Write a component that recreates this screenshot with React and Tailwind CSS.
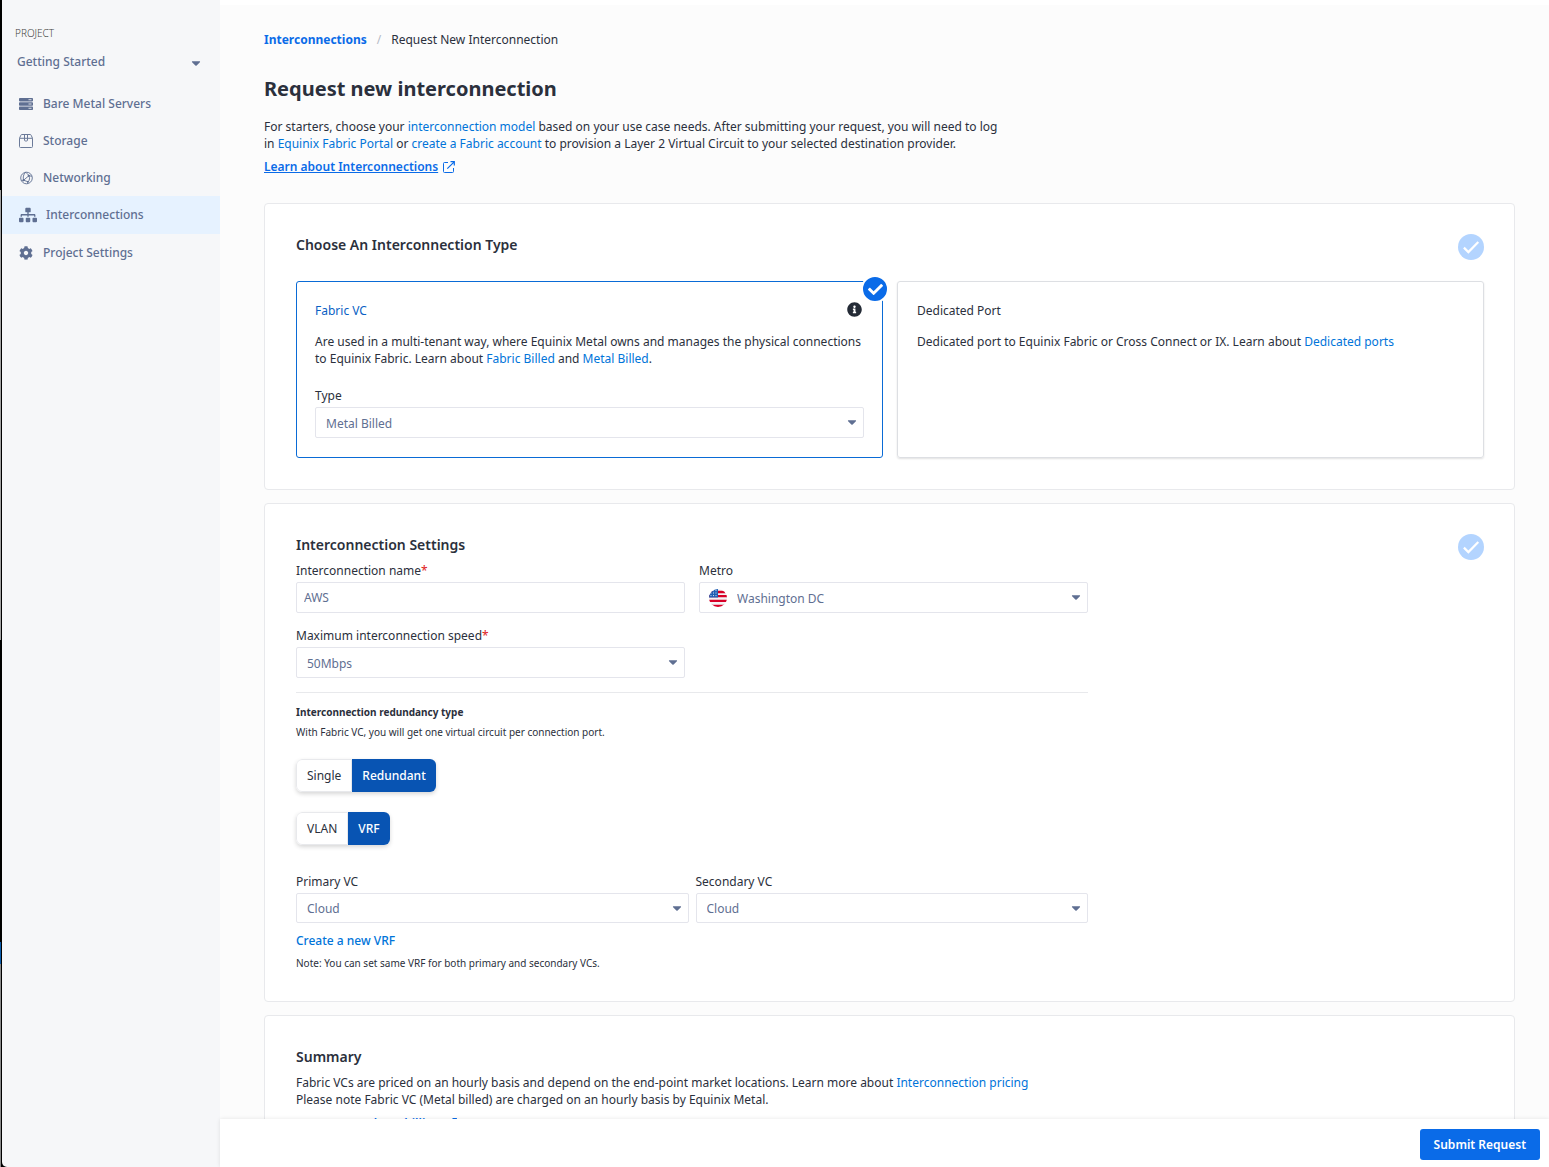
import { useState } from "react";
import { FaCaretDown, FaCheck, FaInfoCircle, FaSitemap, FaCog } from "react-icons/fa";

function ServersIcon() {
  return (
    <svg width="14" height="12" viewBox="0 0 14 12" aria-hidden="true">
      <rect x="0" y="0" width="14" height="3.4" rx="0.8" fill="#5f6f92" />
      <rect x="0" y="4.3" width="14" height="3.4" rx="0.8" fill="#5f6f92" />
      <rect x="0" y="8.6" width="14" height="3.4" rx="0.8" fill="#5f6f92" />
      <path d="M9.5 1.7h3M9.5 6h3M9.5 10.3h3" stroke="#f6f7f9" strokeWidth="0.8" />
    </svg>
  );
}

function StorageIcon() {
  return (
    <svg width="14" height="14" viewBox="0 0 14 14" fill="none" stroke="#6b7a99" strokeWidth="1" aria-hidden="true">
      <path d="M.5 4.3v8.2a1 1 0 0 0 1 1h11a1 1 0 0 0 1-1V4.3zL1.8 1.3a1.2 1.2 0 0 1 1.1-.8h8.2a1.2 1.2 0 0 1 1.1.8l1.3 3" />
      <path d="M5.5.5V6a1 1 0 0 0 1 1h1a1 1 0 0 0 1-1V.5" />
    </svg>
  );
}

function NetworkIcon() {
  return (
    <svg width="14" height="14" viewBox="0 0 14 14" fill="none" stroke="#5f6f92" strokeWidth="0.9" aria-hidden="true">
      <circle cx="7.5" cy="7" r="5.8" />
      <path d="M6.5 1.3C4.3 3.6 3.8 6.4 4.6 9.2L9.8 4.8C11 6.8 10.8 9 9 10.8L4.6 9.2M6.5 1.3C8 2.2 9.2 3.3 9.8 4.8L12.9 5.2M4.6 9.2 2.3 9.4M9 10.8 8.3 12.7" />
      <circle cx="4.6" cy="9.2" r=".7" fill="#5f6f92" />
      <circle cx="9.8" cy="4.8" r=".7" fill="#5f6f92" />
      <circle cx="9" cy="10.8" r=".5" fill="#5f6f92" />
    </svg>
  );
}

function ExternalIcon() {
  return (
    <svg width="12" height="12" viewBox="0 0 12 12" fill="none" stroke="#0a6be8" strokeWidth="1" aria-hidden="true">
      <path d="M5 1.5H1.5a1 1 0 0 0-1 1v8a1 1 0 0 0 1 1h8a1 1 0 0 0 1-1V7" />
      <path d="M7.5.7h3.8v3.8M11.2.8 4.3 7.7" strokeWidth="1.2" />
    </svg>
  );
}

function DoneIcon() {
  return (
    <svg width="26" height="26" viewBox="0 0 26 26" fill="none" className="shrink-0" aria-hidden="true">
      <circle cx="13" cy="13" r="13" fill="#b3d4ff" />
      <path d="M5.9 13.6l4.5 4.5L20.3 8" stroke="#fff" strokeWidth="2.2" />
    </svg>
  );
}

function FlagIcon() {
  return (
    <svg width="18" height="18" viewBox="0 0 18 18" aria-hidden="true">
      <clipPath id="flag-round">
        <circle cx="9" cy="9" r="9" />
      </clipPath>
      <g clipPath="url(#flag-round)">
        <rect width="18" height="18" fill="#f3f3f5" />
        <path d="M0 3h18M0 7.200h18M0 11.800h18M0 16.800h18" stroke="#d80027" strokeWidth="2.300" />
        <rect width="9" height="8.500" fill="#1f5fb5" />
        <path d="M1.500 4h7M1.500 6.600h7M4 1.600h4.500" stroke="#f3f3f5" strokeWidth="0.900" strokeDasharray="1 1.500" />
      </g>
    </svg>
  );
}

const NAV = [
  { label: "Bare Metal Servers", icon: <ServersIcon /> },
  { label: "Storage", icon: <StorageIcon /> },
  { label: "Networking", icon: <NetworkIcon /> },
  { label: "Interconnections", icon: <FaSitemap size={18} />, active: true },
  { label: "Project Settings", icon: <FaCog size={14} /> },
];

function Sidebar() {
  return (
    <aside className="flex w-[218px] shrink-0 flex-col rounded-bl-[5px] bg-[#f6f7f9] pt-[26px] text-[#5f6f92]">
      <label htmlFor="project" className="pl-[13px] text-[10px] leading-[14px] font-light text-[#444]">
        PROJECT
      </label>
      <div className="relative mt-[12px] mb-[14px]">
        <select id="project" className="h-[19px] w-full appearance-none bg-transparent pl-[15px] text-[12px] leading-[18px] font-medium outline-none">
          <option>Getting Started</option>
        </select>
        <FaCaretDown size={14} className="pointer-events-none absolute top-[4px] right-[17px]" />
      </div>
      <nav>
        {NAV.map((item) => (
          <a
            key={item.label}
            href="#"
            className={
              item.active
                ? "flex h-[38px] items-center gap-[9px] bg-[#e6f2ff] pl-[17px] text-[12px] font-medium"
                : "flex h-[37px] items-center gap-[10px] pl-[17px] text-[12px] font-medium"
            }
          >
            {item.icon}
            {item.label}
          </a>
        ))}
      </nav>
    </aside>
  );
}

function Select({ id, label, value, required, icon, tall = true }) {
  return (
    <div className="flex flex-col gap-[2px]">
      <label htmlFor={id} className="leading-[18px]">
        {label}
        {required && <span className="text-[#e02020]">*</span>}
      </label>
      <div className="relative">
        {icon && <span className="pointer-events-none absolute top-[7px] left-[10px]">{icon}</span>}
        <select
          id={id}
          className={[
            "w-full appearance-none rounded-[2px] border border-[#e4e5ec] bg-white pt-[2px] pr-8 text-[#5f6f92] outline-none",
            tall ? "h-[31px]" : "h-[30px]",
            icon ? "pl-[37px]" : "pl-[10px]",
          ].join(" ")}
        >
          <option>{value}</option>
        </select>
        <FaCaretDown size={14} className="pointer-events-none absolute top-[8px] right-[5px] text-[#5f6f92]" />
      </div>
    </div>
  );
}

function Card({ title, done, children }) {
  return (
    <section className="rounded-[4px] border border-[#e8e9ec] bg-white pt-[30px] pr-[30px] pb-[31px] pl-[31px]">
      <div className="flex h-5 items-start justify-between">
        <h2 className="text-[14px] leading-[22px] font-semibold">{title}</h2>
        {done && <DoneIcon />}
      </div>
      {children}
    </section>
  );
}

function Toggle({ label, options, initial }) {
  const [value, setValue] = useState(initial);
  return (
    <div role="group" aria-label={label} className="flex h-[33px] w-fit overflow-hidden rounded-[6px] shadow-[0_2px_4px_rgba(0,0,0,0.16)]">
      {options.map((option) => (
        <button
          key={option}
          type="button"
          aria-pressed={option === value}
          onClick={() => setValue(option)}
          className={
            option === value
              ? "bg-[#0854b3] px-[10px] font-medium text-white"
              : "border border-[#e8e9ec] bg-white px-[10px] first:rounded-l-[6px] last:rounded-r-[6px]"
          }
        >
          {option}
        </button>
      ))}
    </div>
  );
}

function Link({ children }) {
  return (
    <a href="#" className="text-[#0074d9]">
      {children}
    </a>
  );
}

function LearnLink({ children }) {
  return (
    <a href="#" className="flex w-fit items-center gap-[5px] leading-[18px] font-semibold text-[#0a6be8]">
      <span className="underline">{children}</span>
      <ExternalIcon />
    </a>
  );
}

export default function App() {
  return (
    <div className="flex h-screen overflow-hidden bg-white font-['Noto_Sans',sans-serif] text-[12px] text-[#2b303c]">
      <div className="flex shrink-0 bg-black">
        <div className="flex w-px flex-col">
          <div className="flex-[190] bg-black" />
          <div className="flex-[450] bg-[#a3a3a3]" />
          <div className="flex-[302] bg-black" />
          <div className="flex-[22] bg-[#0b5cab]" />
          <div className="flex-[203] bg-[#8a8a8a]" />
        </div>
        <div className="w-px bg-black" />
        <Sidebar />
      </div>

      <div className="flex min-w-0 flex-1 flex-col">
        <main className="min-h-0 flex-1 overflow-hidden border-t-[5px] border-white bg-[#fcfcfc] pt-[26px] pr-[34px] pl-[44px]">
          <nav aria-label="Breadcrumb" className="flex gap-[10px] leading-[18px]">
            <a href="#" className="font-bold text-[#0a6be8]">
              Interconnections
            </a>
            <span className="text-[#b5bac6]">/</span>
            <span>Request New Interconnection</span>
          </nav>
          <h1 className="mt-[26px] text-[20px] leading-[28px] font-bold">Request new interconnection</h1>
          <p className="mt-[15px] max-w-[736px] leading-[17px]">
            For starters, choose your <Link>interconnection model</Link> based on your use case needs. After submitting
            your request, you will need to log in <Link>Equinix Fabric Portal</Link> or{" "}
            <Link>create a Fabric account</Link> to provision a Layer 2 Virtual Circuit to your selected destination
            provider.
          </p>
          <div className="mt-[6px]">
            <LearnLink>Learn about Interconnections</LearnLink>
          </div>

          <form id="request" className="mt-[27px] flex flex-col gap-[13px]">
            <Card title="Choose An Interconnection Type" done>
              <div className="mt-[27px] grid grid-cols-2 gap-[14px]">
                <div className="relative rounded-[3px] border border-[#0a6bd6] px-[18px] pt-5 pb-[19px]">
                  <span className="absolute -top-[7px] -right-[7px] flex size-[28px] items-center justify-center rounded-full border-2 border-white bg-[#0a6be8] text-white">
                    <FaCheck size={15} />
                  </span>
                  <div className="flex h-[18px] items-start justify-between">
                    <input type="radio" name="kind" id="kind-vc" className="sr-only" defaultChecked />
                    <label htmlFor="kind-vc" className="leading-[18px] text-[#0a5fc4]">
                      Fabric VC
                    </label>
                    <FaInfoCircle size={15} className="mr-[2px] text-[#242b36]" />
                  </div>
                  <p className="mt-[13px] leading-[17px]">
                    Are used in a multi-tenant way, where Equinix Metal owns and manages the physical connections to
                    Equinix Fabric. Learn about <Link>Fabric Billed</Link> and <Link>Metal Billed</Link>.
                  </p>
                  <div className="mt-[20px]">
                    <Select id="type" label="Type" value="Metal Billed" />
                  </div>
                </div>
                <div className="rounded-[3px] border border-[#dddfe3] px-[19px] pt-5 pb-[19px] shadow-[0_1px_2px_rgba(0,0,0,0.12)]">
                  <input type="radio" name="kind" id="kind-port" className="sr-only" />
                  <label htmlFor="kind-port" className="block leading-[18px]">
                    Dedicated Port
                  </label>
                  <p className="mt-[13px] leading-[17px]">
                    Dedicated port to Equinix Fabric or Cross Connect or IX. Learn about <Link>Dedicated ports</Link>
                  </p>
                </div>
              </div>
            </Card>

            <Card title="Interconnection Settings" done>
              <div className="max-w-[792px]">
                <div className="mt-[8px] grid grid-cols-2 gap-[14px]">
                  <div className="flex flex-col gap-[2px]">
                    <label htmlFor="name" className="leading-[18px]">
                      Interconnection name<span className="text-[#e02020]">*</span>
                    </label>
                    <input
                      id="name"
                      defaultValue="AWS"
                      className="h-[31px] w-full rounded-[2px] border border-[#e4e5ec] bg-white px-[7px] text-[#5f6f92] outline-none"
                    />
                  </div>
                  <Select id="metro" label="Metro" value="Washington DC" icon={<FlagIcon />} />
                  <Select id="speed" label="Maximum interconnection speed" value="50Mbps" required />
                </div>
                <hr className="mt-[14px] border-[#e8e9ec]" />
                <h3 className="mt-[12px] text-[10px] leading-[14px] font-bold">Interconnection redundancy type</h3>
                <p className="mt-[6px] text-[10px] leading-[14px]">
                  With Fabric VC, you will get one virtual circuit per connection port.
                </p>
                <div className="mt-[20px] flex flex-col gap-5">
                  <Toggle label="Redundancy" options={["Single", "Redundant"]} initial="Redundant" />
                  <Toggle label="Network type" options={["VLAN", "VRF"]} initial="VRF" />
                </div>
                <div className="mt-[28px] grid grid-cols-2 gap-[7px]">
                  <Select id="primary" label="Primary VC" value="Cloud" tall={false} />
                  <Select id="secondary" label="Secondary VC" value="Cloud" tall={false} />
                </div>
                <a href="#" className="mt-[9px] block w-fit leading-[18px] font-medium text-[#0074d9]">
                  Create a new VRF
                </a>
                <p className="mt-[6px] text-[10px] leading-[14px]">
                  Note: You can set same VRF for both primary and secondary VCs.
                </p>
              </div>
            </Card>

            <Card title="Summary">
              <p className="mt-[8px] leading-[17px]">
                Fabric VCs are priced on an hourly basis and depend on the end-point market locations. Learn more about{" "}
                <Link>Interconnection pricing</Link>
                <br />
                Please note Fabric VC (Metal billed) are charged on an hourly basis by Equinix Metal.
              </p>
              <div className="mt-[7px]">
                <LearnLink>Learn more about billing</LearnLink>
              </div>
            </Card>
          </form>
        </main>
        <footer className="relative flex h-[48px] shrink-0 items-center justify-end bg-white pt-[3px] pr-[9px] shadow-[0_0_4px_rgba(0,0,0,0.1)]">
          <button type="submit" form="request" className="h-[31px] rounded-[3px] bg-[#0a6be8] px-[14px] font-semibold text-white">
            Submit Request
          </button>
        </footer>
      </div>
    </div>
  );
}
